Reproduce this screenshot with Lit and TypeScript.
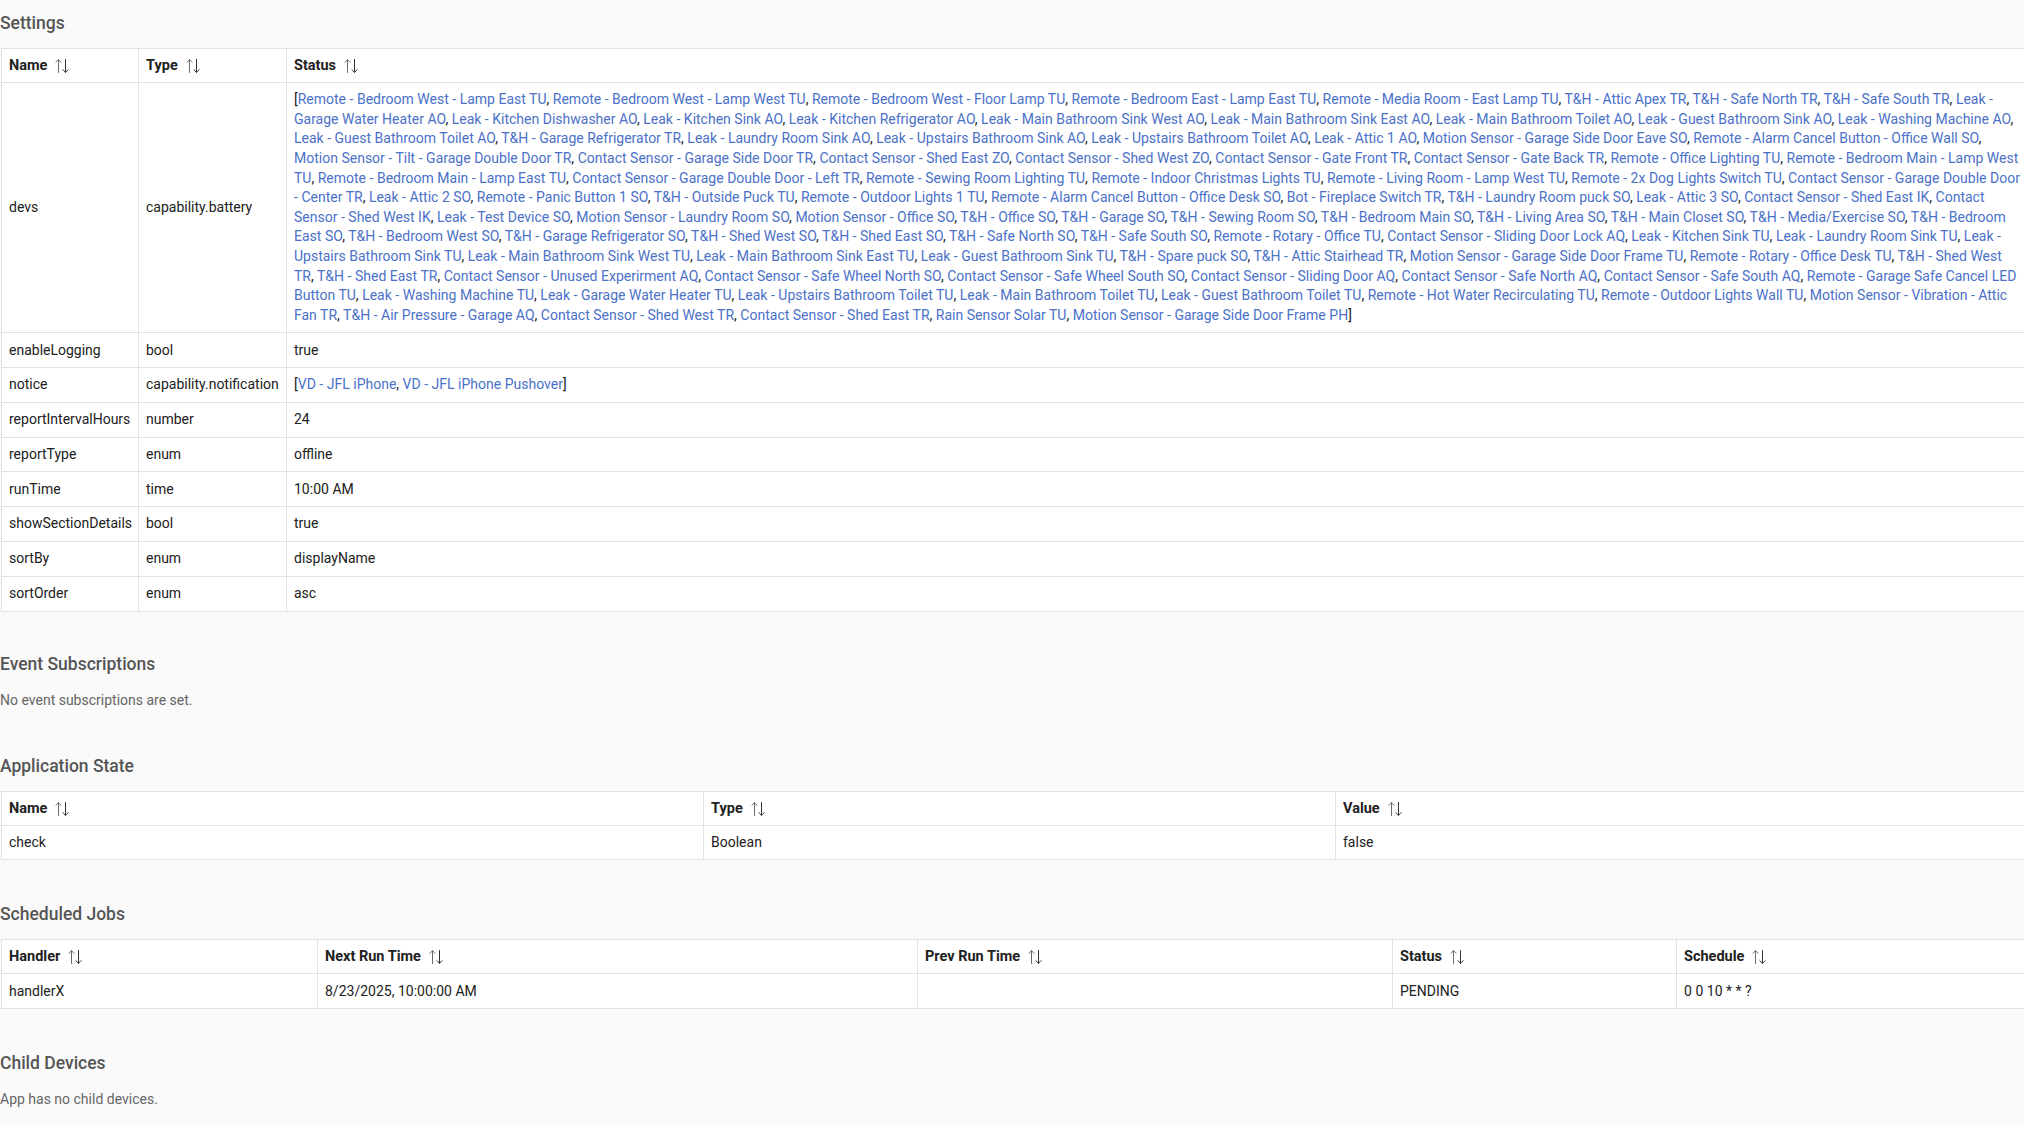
import { LitElement, html, css } from "lit";
import { customElement } from "lit/decorators.js";

const DEVS = `Remote - Bedroom West - Lamp East TU|Remote - Bedroom West - Lamp West TU|Remote - Bedroom West - Floor Lamp TU|Remote - Bedroom East - Lamp East TU|Remote - Media Room - East Lamp TU|T&H - Attic Apex TR|T&H - Safe North TR|T&H - Safe South TR|Leak - Garage Water Heater AO|Leak - Kitchen Dishwasher AO|Leak - Kitchen Sink AO|Leak - Kitchen Refrigerator AO|Leak - Main Bathroom Sink West AO|Leak - Main Bathroom Sink East AO|Leak - Main Bathroom Toilet AO|Leak - Guest Bathroom Sink AO|Leak - Washing Machine AO|Leak - Guest Bathroom Toilet AO|T&H - Garage Refrigerator TR|Leak - Laundry Room Sink AO|Leak - Upstairs Bathroom Sink AO|Leak - Upstairs Bathroom Toilet AO|Leak - Attic 1 AO|Motion Sensor - Garage Side Door Eave SO|Remote - Alarm Cancel Button - Office Wall SO|Motion Sensor - Tilt - Garage Double Door TR|Contact Sensor - Garage Side Door TR|Contact Sensor - Shed East ZO|Contact Sensor - Shed West ZO|Contact Sensor - Gate Front TR|Contact Sensor - Gate Back TR|Remote - Office Lighting TU|Remote - Bedroom Main - Lamp West TU|Remote - Bedroom Main - Lamp East TU|Contact Sensor - Garage Double Door - Left TR|Remote - Sewing Room Lighting TU|Remote - Indoor Christmas Lights TU|Remote - Living Room - Lamp West TU|Remote - 2x Dog Lights Switch TU|Contact Sensor - Garage Double Door - Center TR|Leak - Attic 2 SO|Remote - Panic Button 1 SO|T&H - Outside Puck TU|Remote - Outdoor Lights 1 TU|Remote - Alarm Cancel Button - Office Desk SO|Bot - Fireplace Switch TR|T&H - Laundry Room puck SO|Leak - Attic 3 SO|Contact Sensor - Shed East IK|Contact Sensor - Shed West IK|Leak - Test Device SO|Motion Sensor - Laundry Room SO|Motion Sensor - Office SO|T&H - Office SO|T&H - Garage SO|T&H - Sewing Room SO|T&H - Bedroom Main SO|T&H - Living Area SO|T&H - Main Closet SO|T&H - Media/Exercise SO|T&H - Bedroom East SO|T&H - Bedroom West SO|T&H - Garage Refrigerator SO|T&H - Shed West SO|T&H - Shed East SO|T&H - Safe North SO|T&H - Safe South SO|Remote - Rotary - Office TU|Contact Sensor - Sliding Door Lock AQ|Leak - Kitchen Sink TU|Leak - Laundry Room Sink TU|Leak - Upstairs Bathroom Sink TU|Leak - Main Bathroom Sink West TU|Leak - Main Bathroom Sink East TU|Leak - Guest Bathroom Sink TU|T&H - Spare puck SO|T&H - Attic Stairhead TR|Motion Sensor - Garage Side Door Frame TU|Remote - Rotary - Office Desk TU|T&H - Shed West TR|T&H - Shed East TR|Contact Sensor - Unused Experirment AQ|Contact Sensor - Safe Wheel North SO|Contact Sensor - Safe Wheel South SO|Contact Sensor - Sliding Door AQ|Contact Sensor - Safe North AQ|Contact Sensor - Safe South AQ|Remote - Garage Safe Cancel LED Button TU|Leak - Washing Machine TU|Leak - Garage Water Heater TU|Leak - Upstairs Bathroom Toilet TU|Leak - Main Bathroom Toilet TU|Leak - Guest Bathroom Toilet TU|Remote - Hot Water Recirculating TU|Remote - Outdoor Lights Wall TU|Motion Sensor - Vibration - Attic Fan TR|T&H - Air Pressure - Garage AQ|Contact Sensor - Shed West TR|Contact Sensor - Shed East TR|Rain Sensor Solar TU|Motion Sensor - Garage Side Door Frame PH`.split("|");

const NOTICE = ["VD - JFL iPhone", "VD - JFL iPhone Pushover"];

const sortIcon = html`<svg class="sort" width="14" height="14" viewBox="0 0 14 14" fill="none" stroke-width="1" stroke-linecap="round" stroke-linejoin="round">
  <path class="up" d="M3.5 13.5V.7M.9 3.3 3.5.7l2.6 2.6"/>
  <path class="down" d="M10.5.5v12.8M7.9 10.7l2.6 2.6 2.6-2.6"/>
</svg>`;

const links = (items: string[]) => html`[${items.map(
  (d, i) => html`${i ? ", " : ""}<a>${d}</a>`
)}]`;

type Cell = unknown;

@customElement("app-root")
export class AppRoot extends LitElement {
  static styles = css`
    :host {
      display: block;
      min-height: 1125px;
      background: #fafafa;
      font-family: Roboto, "Liberation Sans", sans-serif;
      font-size: 14px;
      line-height: 19.6px;
      color: #212121;
      padding-top: 11px;
      box-sizing: border-box;
      overflow: hidden;
    }
    section { margin-bottom: 42px; }
    section:first-child { margin-bottom: 40px; }
    h2 {
      margin: 0 0 13px;
      font-size: 17.5px;
      line-height: 24px;
      font-weight: 500;
      color: #555;
    }
    p {
      margin: 0;
      padding: 1px 0 2px;
      line-height: 20px;
      color: #666;
    }
    table {
      width: 2030px;
      margin-left: 1px;
      border-collapse: collapse;
      table-layout: fixed;
      background: #fff;
    }
    th, td {
      border: 1px solid #e2e2e2;
      text-align: left;
      vertical-align: middle;
    }
    td {
      padding: 7.2px 7px 7px 7px;
      word-spacing: 0.04px;
    }
    td:not(.wrap) { white-space: nowrap; }
    th {
      padding: 7px;
      font-size: 14.5px;
      font-weight: 700;
      line-height: 19px;
      color: #212121;
      white-space: nowrap;
    }
    .sort {
      margin-left: 8px;
      vertical-align: -3px;
    }
    .sort .up { stroke: #6c6c6c; }
    .sort .down { stroke: #333; }
    a { color: #4b71c8; text-decoration: none; }
  `;

  private table(cols: number[], head: string[], rows: Cell[][]) {
    return html`<table>
      <colgroup>${cols.map((w) => html`<col style="width:${w}px" />`)}</colgroup>
      <thead><tr>${head.map((h) => html`<th>${h}${sortIcon}</th>`)}</tr></thead>
      <tbody>${rows.map((r) => html`<tr>${r.map((c, i) => html`<td class=${i === r.length - 1 ? "wrap" : ""}>${c}</td>`)}</tr>`)}</tbody>
    </table>`;
  }

  render() {
    return html`
      <section>
        <h2>Settings</h2>
        ${this.table([137, 148, 1745], ["Name", "Type", "Status"], [
          ["devs", "capability.battery", links(DEVS)],
          ["enableLogging", "bool", "true"],
          ["notice", "capability.notification", links(NOTICE)],
          ["reportIntervalHours", "number", "24"],
          ["reportType", "enum", "offline"],
          ["runTime", "time", "10:00 AM"],
          ["showSectionDetails", "bool", "true"],
          ["sortBy", "enum", "displayName"],
          ["sortOrder", "enum", "asc"],
        ])}
      </section>
      <section>
        <h2>Event Subscriptions</h2>
        <p>No event subscriptions are set.</p>
      </section>
      <section>
        <h2>Application State</h2>
        ${this.table([702, 632, 696], ["Name", "Type", "Value"], [["check", "Boolean", "false"]])}
      </section>
      <section>
        <h2>Scheduled Jobs</h2>
        ${this.table([316, 600, 475, 284, 355], ["Handler", "Next Run Time", "Prev Run Time", "Status", "Schedule"], [
          ["handlerX", "8/23/2025, 10:00:00 AM", "", "PENDING", "0 0 10 * * ?"],
        ])}
      </section>
      <section>
        <h2>Child Devices</h2>
        <p>App has no child devices.</p>
      </section>
    `;
  }
}
